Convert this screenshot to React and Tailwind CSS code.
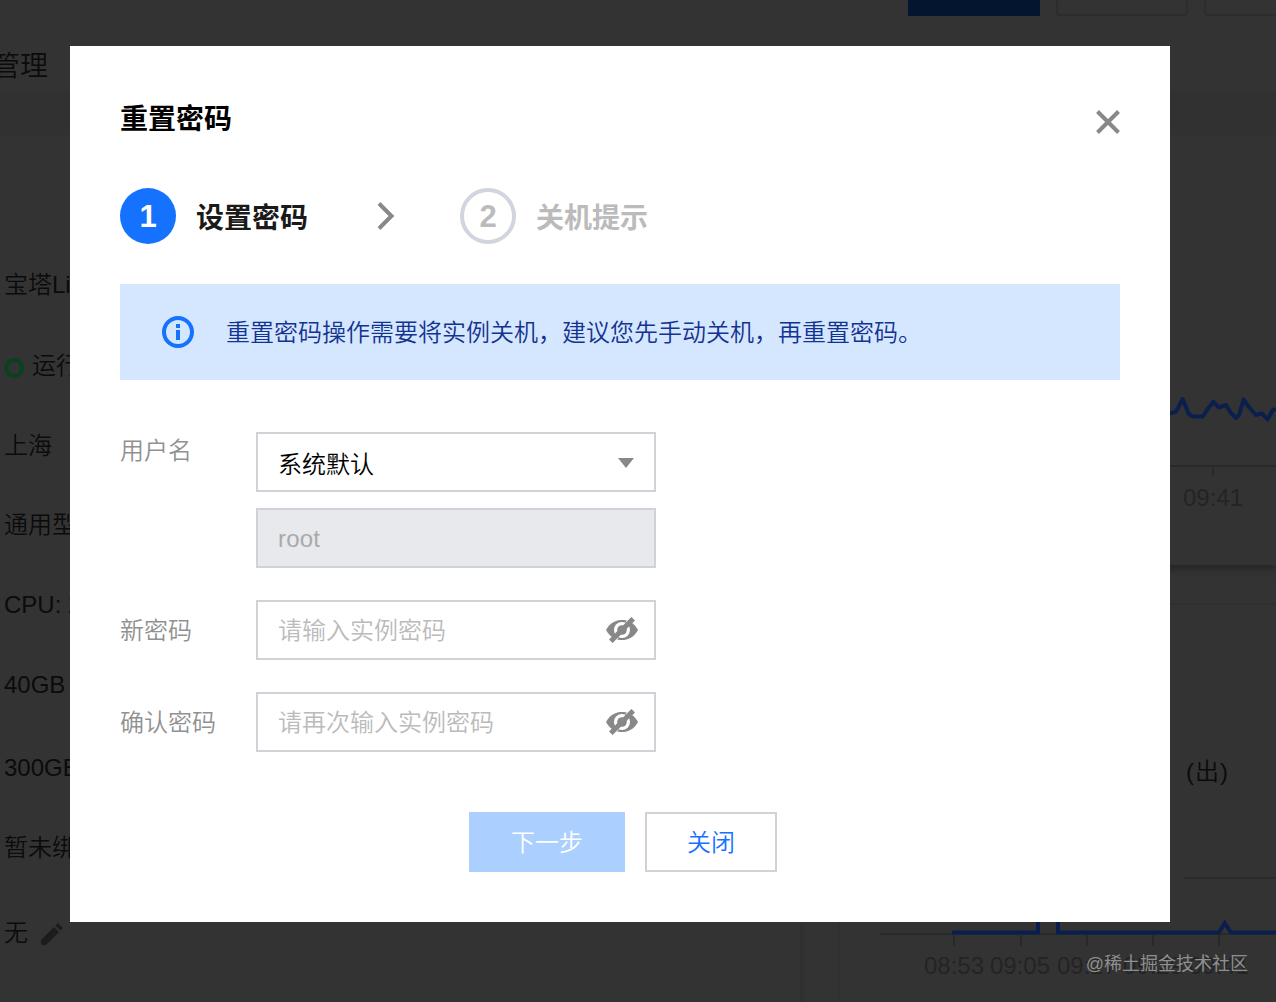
import { useState } from "react";

const infoRows = [
  { text: "宝塔Linux面板", height: "h-20" },
  { text: "运行中", height: "h-[82px]", running: true },
  { text: "上海", height: "h-[78px]" },
  { text: "通用型", height: "h-20" },
  { text: "CPU: 2核", height: "h-20" },
  { text: "40GB", height: "h-20" },
  { text: "300GB", height: "h-[86px]" },
  { text: "暂未绑定", height: "h-[74px]" },
  { text: "无", height: "h-24", editable: true },
];

const CloseIcon = () => (
  <svg width="26" height="26" viewBox="0 0 26 26" fill="none" stroke="#888" strokeWidth="4">
    <path d="M2.5 2.5L23.5 23.5M23.5 2.5L2.5 23.5" />
  </svg>
);

const ChevronIcon = () => (
  <svg width="18" height="30" viewBox="0 0 18 30" fill="none" stroke="#888" strokeWidth="4">
    <path d="M2 2.5L14.5 15L2 27.5" />
  </svg>
);

const InfoIcon = () => (
  <svg width="32" height="32" viewBox="0 0 32 32">
    <circle cx="16" cy="16" r="14" fill="none" stroke="#1472ff" strokeWidth="4" />
    <rect x="14" y="8" width="4" height="4" fill="#1472ff" />
    <rect x="14" y="14" width="4" height="10" fill="#1472ff" />
  </svg>
);

const EyeOffIcon = () => (
  <svg width="32" height="26" viewBox="0 0 32 26">
    <path
      d="M0 13C4 5.500 10 3 16 3C22 3 28 5.500 32 13C28 20.500 22 23 16 23C10 23 4 20.500 0 13Z"
      fill="#888"
    />
    <circle cx="16" cy="13" r="8" fill="#fff" />
    <path d="M6.800 25.800L12 20.500M20 5.500L25.200 0.200" stroke="#fff" strokeWidth="1.500" />
    <path d="M4.800 24.300L27.200 1.700" stroke="#888" strokeWidth="5" />
    <circle cx="16" cy="13" r="4.800" fill="#888" />
  </svg>
);

const PencilIcon = () => (
  <svg width="24" height="24" viewBox="0 0 24 24" fill="#1c1c1c">
    <path d="M1 18L14 5L19 10L6 23C3 24 0 22 1 18Z" />
    <path d="M15.500 3.500L18 1L23 6L20.500 8.500Z" />
  </svg>
);

const Background = () => (
  <div className="h-full w-full overflow-hidden bg-[#333] font-[350] text-[#0b0b0b]">
    <div className="flex h-4 gap-4 pl-[908px]">
      <div className="w-[132px] shrink-0 bg-[#03152f]" />
      <div className="w-[132px] shrink-0 rounded-b-sm border-2 border-t-0 border-[#2d2d2d]" />
      <div className="w-[132px] shrink-0 rounded-b-sm border-2 border-t-0 border-[#2d2d2d]" />
    </div>
    <div className="-ml-2 flex h-[77px] items-center pt-[25px] text-[28px]">管理</div>
    <div className="h-[42px] bg-[#313131]" />

    <div className="flex h-[867px]">
      <div className="w-[804px] shrink-0 border-r-4 border-[#303030] pl-1 pt-[110px] text-2xl">
        {infoRows.map((row) => (
          <div key={row.text} className={`flex items-center whitespace-nowrap ${row.height}`}>
            {row.running && (
              <span className="mr-2 mt-1 h-5 w-5 rounded-full border-4 border-[#09401f]" />
            )}
            {row.text}
            {row.editable && <span className="ml-3 mt-0.5"><PencilIcon /></span>}
          </div>
        ))}
      </div>

      <div className="ml-[34px] w-[438px] shrink-0">
        <div className="h-[430px] shadow-[0_6px_5px_-1px_#282828]">
          <svg width="438" height="430" viewBox="838 135 438 430">
            <path d="M880 466H1276M1213 466V476" stroke="#292929" strokeWidth="2" />
            <path
              d="M1164 416L1170 413.300L1176 411.700L1182.700 399L1188.700 414L1193 416.500H1202.700L1207 410L1213.300 401.700L1218.700 407.500L1226 405L1230.700 412.700L1236 418L1239 415L1243.700 399.300L1248 406L1256 415L1261.700 413.300L1267.700 419.300L1272.700 410L1277 409"
              fill="none"
              stroke="#0a1f4d"
              strokeWidth="4"
              strokeLinejoin="round"
            />
            <text x="1213" y="506" fontSize="24" fill="#242424" textAnchor="middle">09:41</text>
          </svg>
        </div>
        <div className="mt-[38px] h-[399px] border-l-2 border-t-2 border-[#303030]">
          <div className="h-[333px] pl-[346px] pt-[149px] text-2xl leading-9 tracking-[1px]">
            (出)
          </div>
          <svg className="-ml-0.5 -mt-[65px]" width="438" height="129" viewBox="838 873 438 129">
            <path d="M1184 878H1276" stroke="#2b2b2b" strokeWidth="2" />
            <path d="M880 934H1276" stroke="#292929" strokeWidth="2" />
            <path d="M954 935V946M1021 935V946M1087 935V946M1153 935V946M1219 935V946" stroke="#292929" strokeWidth="2" />
            <path
              d="M952 932.500H1038V900H1058V932.500H1219L1224.700 923L1231 932.500H1276"
              fill="none"
              stroke="#0a1f4d"
              strokeWidth="4"
            />
            <g fontSize="24" fill="#242424">
              <text x="924" y="974">08:53</text>
              <text x="990" y="974">09:05</text>
              <text x="1057" y="974">09:17</text>
              <text x="1123" y="974">09:29</text>
              <text x="1189" y="974">09:41</text>
            </g>
          </svg>
        </div>
      </div>
    </div>
  </div>
);

const PasswordRow = ({ label, placeholder }) => {
  const [value, setValue] = useState("");
  const [visible, setVisible] = useState(false);

  return (
    <div className="mt-8 flex items-center">
      <label className="w-[136px] shrink-0 pt-0.5 text-[#919191]">{label}</label>
      <div className="flex h-[60px] w-[400px] items-center border-2 border-[#cfd2d6] pl-5 pr-4">
        <input
          type={visible ? "text" : "password"}
          value={value}
          onChange={(e) => setValue(e.target.value)}
          placeholder={placeholder}
          className="min-w-0 flex-1 pt-0.5 outline-none placeholder:text-[#bbb]"
        />
        <button onClick={() => setVisible((v) => !v)}>
          <EyeOffIcon />
        </button>
      </div>
    </div>
  );
};

const ResetPasswordDialog = () => (
  <div className="h-[876px] w-[1100px] bg-white px-[50px] text-2xl font-[350] text-black">
    <div className="flex h-[142px] items-center justify-between pt-1.5">
      <h3 className="text-[28px] font-bold">重置密码</h3>
      <button className="-mr-px pt-1">
        <CloseIcon />
      </button>
    </div>

    {/* Steps */}
    <div className="flex h-14 items-center text-[28px] font-bold">
      <span className="flex h-14 w-14 items-center justify-center rounded-full bg-[#1472ff] pt-0.5 text-[31px] text-white">1</span>
      <span className="ml-5 w-[181px] pt-1.5 text-[#1a1a1a]">设置密码</span>
      <ChevronIcon />
      <span className="ml-[65px] flex h-14 w-14 items-center justify-center rounded-full border-4 border-[#d2d5de] pt-0.5 text-[31px] text-[#bbb]">2</span>
      <span className="ml-5 pt-1.5 text-[#bbb]">关机提示</span>
    </div>

    <div className="mt-10 flex h-24 items-center bg-[#d5e7ff] pl-[42px] text-[#12338f]">
      <InfoIcon />
      <p className="ml-8 pt-0.5">重置密码操作需要将实例关机，建议您先手动关机，再重置密码。</p>
    </div>

    {/* Form */}
    <div className="mt-[52px] flex items-start">
      <label className="w-[136px] shrink-0 pt-px leading-9 text-[#919191]">用户名</label>
      <div className="w-[400px]">
        <div className="flex h-[60px] items-center justify-between border-2 border-[#cfd2d6] pl-5 pr-5">
          <span className="pt-1.5">系统默认</span>
          <svg className="mt-0.5" width="16" height="10" viewBox="0 0 16 10" fill="#888">
            <path d="M0 0H16L8 10Z" />
          </svg>
        </div>
        <div className="mt-4 flex h-[60px] items-center border-2 border-[#cfd2d6] bg-[#e7e9ed] pl-5 pt-0.5 tracking-[0.2px] text-[#aaa]">
          root
        </div>
      </div>
    </div>
    <PasswordRow label="新密码" placeholder="请输入实例密码" />
    <PasswordRow label="确认密码" placeholder="请再次输入实例密码" />

    <div className="mt-[60px] flex gap-5 pl-[349px]">
      <button className="h-[60px] w-[156px] bg-[#abd0ff] pt-0.5 text-white">下一步</button>
      <button className="h-[60px] w-[132px] border-2 border-[#cfd2d6] pt-0.5 text-[#1472ff]">关闭</button>
    </div>
  </div>
);

const App = () => {
  return (
    <div className="relative h-[1002px] w-[1276px] overflow-hidden font-['Liberation_Sans','Noto_Sans_CJK_SC',sans-serif]">
      <Background />
      <div className="absolute left-[70px] top-[46px]">
        <ResetPasswordDialog />
      </div>
      <div className="absolute bottom-6 right-7 text-lg text-[#8f8f8f]">@稀土掘金技术社区</div>
    </div>
  );
};

export default App;
